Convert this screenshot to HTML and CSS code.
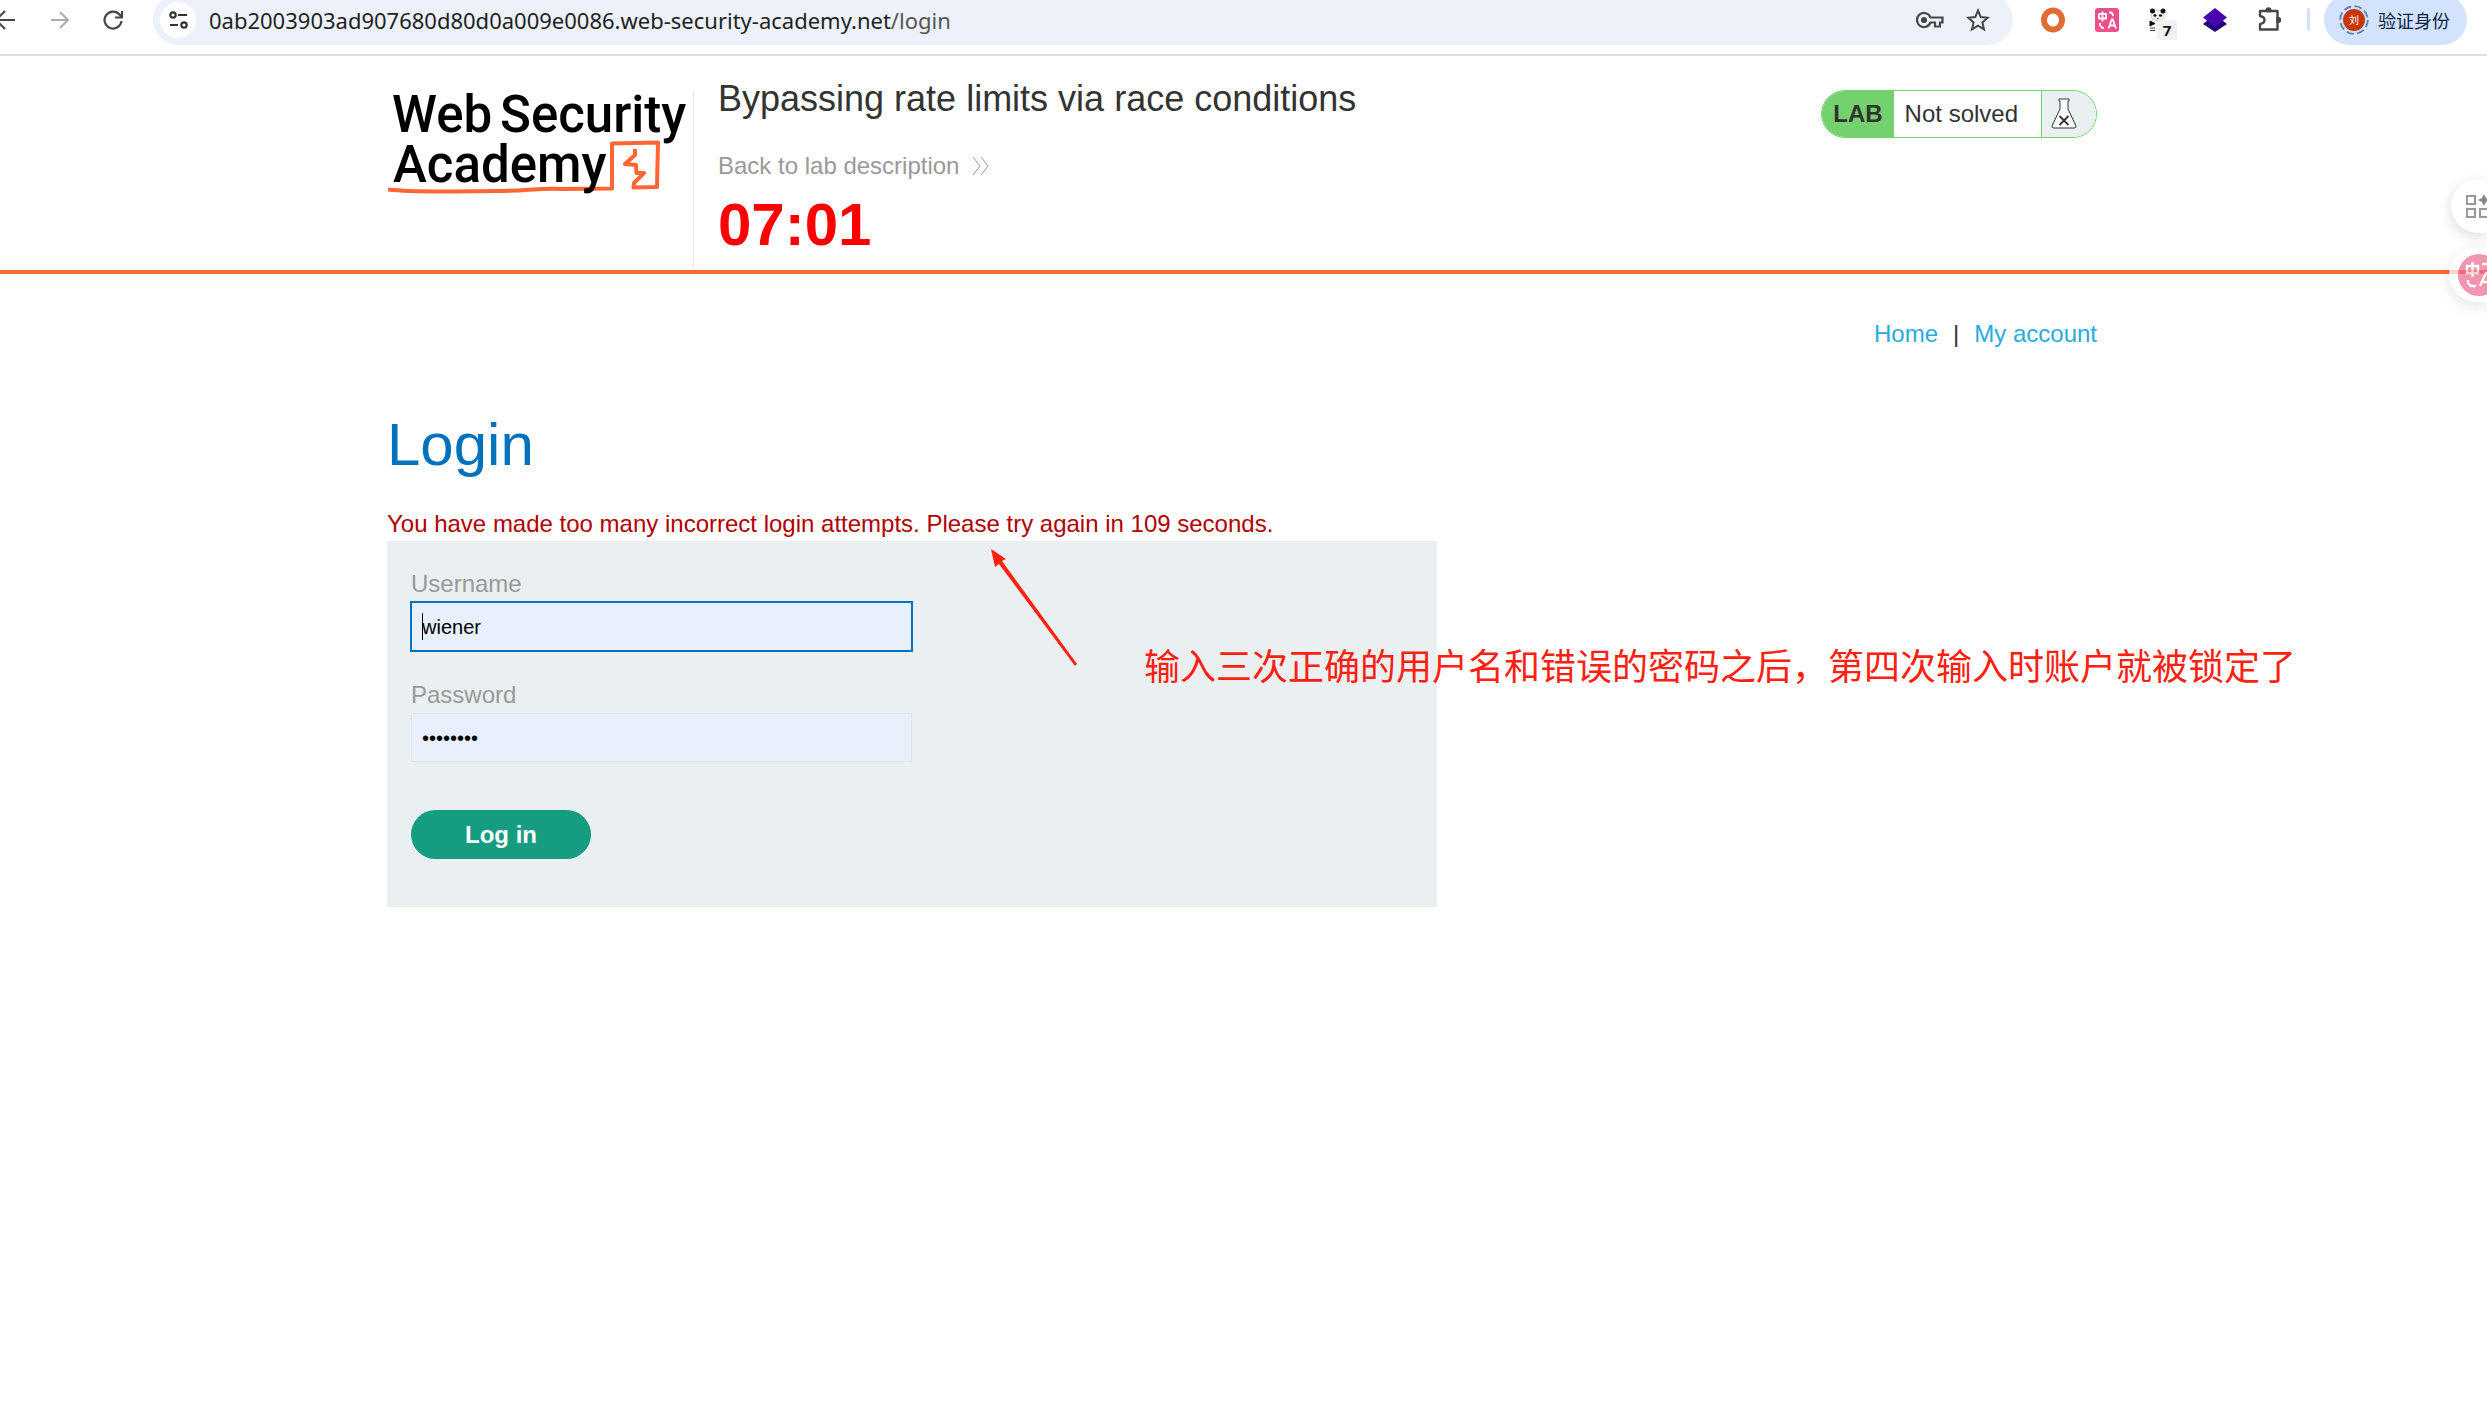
FILE: index.html
```html
<!DOCTYPE html>
<html lang="en">
<head>
    <meta charset="UTF-8">
    <meta name="viewport" content="width=device-width, initial-scale=1.0">
    <title>Bypassing rate limits via race conditions</title>
    <link rel="stylesheet" href="styles.css">
</head>
<body>
    <!-- Browser toolbar -->
    <div class="toolbar">
        <div class="nav-buttons">
            <button type="button" aria-label="Back"><svg width="24" height="24" viewBox="0 0 24 24" fill="none" stroke="#474747" stroke-width="2.2"><path d="M22 12H4M12 3l-9 9 9 9"/></svg></button>
            <button type="button" aria-label="Forward"><svg width="24" height="24" viewBox="0 0 24 24" fill="none" stroke="#ababab" stroke-width="2"><path d="M4 12h17M13 4l8 8-8 8"/></svg></button>
            <button type="button" aria-label="Reload"><svg width="24" height="24" viewBox="0 0 24 24" fill="none" stroke="#474747" stroke-width="2.2"><path d="M20.500 13a8.500 8.500 0 1 1-2-6.500l2 2M21 3v6.500h-7"/></svg></button>
        </div>

        <div class="omnibox">
            <button type="button" class="site-info" aria-label="Site information"><svg width="20" height="20" viewBox="0 0 20 20" fill="none" stroke="#333" stroke-width="2.2"><circle cx="5" cy="5" r="2.700"/><path d="M10 5h9M2 15h8"/><circle cx="16" cy="15" r="2.700"/></svg></button>
            <div class="url">0ab2003903ad907680d80d0a009e0086.web-security-academy.net<span>/login</span></div>
            <button type="button" aria-label="Passwords"><svg width="28" height="20" viewBox="0 0 28 20" fill="none" stroke="#474747" stroke-width="2.2"><path d="M14.500 7.500A7 7 0 1 0 14.500 12.500H19v4h5v-4h2.500v-5z"/><circle cx="8" cy="10" r="2" fill="#474747"/></svg></button>
            <button type="button" aria-label="Bookmark"><svg width="24" height="24" viewBox="0 0 24 24" fill="none" stroke="#474747" stroke-width="2"><path d="M12 2.500l2.700 6.600 7.100.6-5.400 4.700 1.600 7-6-3.700-6 3.700 1.600-7-5.400-4.700 7.100-.6z"/></svg></button>
        </div>

        <div class="extensions">
            <button type="button" aria-label="Proxy"><svg width="24" height="26" viewBox="0 0 24 26"><ellipse cx="12" cy="13" rx="9" ry="9.500" fill="#fff" stroke="#e06b35" stroke-width="6"/></svg></button>
            <button type="button" aria-label="Translate"><svg width="24" height="26" viewBox="0 0 24 26"><rect y="1" width="24" height="24" rx="3" fill="#ee4f8b"/><path d="M4 7h7v4.500H4zM7.500 4.500v10M14 5.500h2.500l2 3.500M5 16v2.500l2.500 2.500H9M13.500 21.500l3.300-9h.9l3.300 9M15 18.500h4.500" fill="none" stroke="#fff" stroke-width="1.800"/></svg></button>
            <button type="button" class="panda" aria-label="Panda"><svg width="24" height="26" viewBox="0 0 24 26"><path d="M2 9c0-8 13-8 13 0 0 6-13 6-13 0z" fill="#f4f4f4" stroke="#ccc"/><circle cx="3.500" cy="4" r="2.500" fill="#111"/><circle cx="14" cy="4" r="2.500" fill="#111"/><ellipse cx="6" cy="8.500" rx="1.600" ry="1.200" fill="#111"/><ellipse cx="11.500" cy="8.500" rx="1.600" ry="1.200" fill="#111"/><path d="M8 11.500h1.500M1 14l5 2.500L1 19z" stroke="#111" fill="#111"/><path d="M1 21h5M1 23.500h5" stroke="#444"/></svg><span class="count">7</span></button>
            <button type="button" aria-label="Layers"><svg width="24" height="26" viewBox="0 0 24 26"><path d="M0 17l5-4h14l5 4-12 8z" fill="#23007c"/><path d="M12 1l12 9.500L12 20 0 10.500z" fill="#4806ad"/></svg></button>
            <button type="button" aria-label="Extensions"><svg width="26" height="26" viewBox="0 0 26 26" fill="none" stroke="#474747" stroke-width="2.400" stroke-linejoin="round"><path d="M3 4h17.500v18.500H3V17c6-1 6-7 0-8z"/><path d="M9.500 4a2 2.500 0 0 1 4 0zM20.500 11a2.500 2 0 0 1 0 4z" fill="#474747"/></svg></button>
        </div>
        <button type="button" class="profile">
            <svg width="30" height="30" viewBox="0 0 30 30"><circle cx="15" cy="15" r="13.800" fill="none" stroke="#5f7fb5" stroke-width="1.800" stroke-dasharray="7.500 3.340"/><circle cx="15" cy="15" r="11" fill="#c6370c"/><text x="15" y="19" class="avatar-text">刘</text></svg>
            验证身份
        </button>
    </div>

    <!-- Lab header -->
    <header class="lab-header">
        <div class="container header-row">
            <div class="logo">
                <svg width="300" height="110" viewBox="0 0 300 110" role="img" aria-label="Web Security Academy">
                    <path d="M1 99.500C30 103 80 101 110 101S150 98 175 99L225 98.500V53.500L271 52.500L270 97L246.500 97.500L247 93L257 83L249.500 83L249 75L238 74L248 65V59" class="logo-line"/>
                    <text x="5" y="42" class="logo-text">Web</text>
                    <text x="113" y="42" class="logo-text">Security</text>
                    <text x="6" y="92" class="logo-text">Academy</text>
                </svg>
            </div>
            <div class="lab-title">
                <h2>Bypassing rate limits via race conditions</h2>
                <a class="back-link" href="#">Back to lab description
                    <svg width="18" height="20" viewBox="0 0 18 20" fill="none" stroke="#999"><path d="M1 1l7 9-7 9M9 1l7 9-7 9"/></svg>
                </a>
                <p class="timer">07:01</p>
            </div>
            <div class="lab-status">
                <span class="status-tag">LAB</span>
                <p>Not solved</p>
                <span class="status-icon"><svg width="26" height="32" viewBox="0 0 26 32" fill="#fff" stroke="#333"><path d="M8 1h10v2h-1v8l8 17q0 2-2 2H3q-2 0-2-2L9 11V3H8z"/><path d="M8.500 18l9 9M17.500 18l-9 9" stroke-width="1.800"/></svg></span>
            </div>
        </div>
    </header>

    <main class="page">
        <div class="container">
            <nav class="top-links">
                <a href="#">Home</a>
                <span>|</span>
                <a href="#">My account</a>
            </nav>

            <h1>Login</h1>
            <p class="warning">You have made too many incorrect login attempts. Please try again in 109 seconds.</p>

            <section class="login-box">
                <form class="login-form">
                    <label for="username">Username</label>
                    <div class="field focused">
                        <input type="text" id="username" name="username" value="wiener">
                    </div>
                    <label for="password">Password</label>
                    <div class="field">
                        <input type="password" id="password" name="password" value="password">
                    </div>
                    <button type="button" class="login-button">Log in</button>
                </form>

                <!-- Red notes drawn over the page -->
                <svg class="arrow" width="90" height="120" viewBox="0 0 90 120" fill="#ff2010"><path d="M0 0L15 10 11 12 86 115 84 117 8 15 4 18z"/></svg>
                <p class="note">输入三次正确的用户名和错误的密码之后，第四次输入时账户就被锁定了</p>
            </section>
        </div>
    </main>

    <!-- Floating side buttons -->
    <div class="side-buttons">
        <button type="button" class="side-apps" aria-label="Apps"><svg width="32" height="26" viewBox="0 0 32 26" fill="none" stroke="#999" stroke-width="2"><rect x="1" y="3" width="8" height="8"/><rect x="1" y="16" width="8" height="8"/><rect x="14" y="16" width="8" height="8"/><path d="M18 1l2 4 4 2-4 2-2 4-2-4-4-2 4-2z" fill="#888" stroke="none"/></svg></button>
        <button type="button" class="side-translate" aria-label="Translate page"><svg width="42" height="42" viewBox="0 0 42 42"><circle cx="21" cy="21" r="21" fill="#ed6d93"/><path d="M9 12h11v7H9zM14.500 8v15M24 10h5l3 5M10 26v3l3 3h5M22 32l6-13h2l6 13M24 28h9" fill="none" stroke="#fff" stroke-width="2.400"/></svg></button>
    </div>
</body>
</html>
```
FILE: styles.css
```css
/* General */
* { box-sizing: border-box; }
body { margin: 0; font-family: "Liberation Sans", Arial, sans-serif; font-size: 24px; line-height: 36px; color: #333332; background: #fff; overflow-x: hidden; }
h1, h2, p { margin: 0; font-weight: normal; }
a { text-decoration: none; }
button { border: none; background: none; padding: 0; font-family: inherit; cursor: pointer; }
svg { display: block; flex: none; }
.container { max-width: 1710px; margin: 0 auto; }

/* Browser toolbar */
.toolbar { display: flex; height: 56px; border-bottom: 2px solid #dedede; overflow: hidden; font-family: "Noto Sans", "Noto Sans CJK SC", sans-serif; }
.toolbar > * { height: 51px; margin-top: -6px; flex: none; }
.nav-buttons { display: flex; align-items: center; gap: 30px; width: 153px; margin-left: -7px; }
.toolbar .omnibox { display: flex; align-items: center; flex: 1; margin-left: 7px; padding: 0 23px 0 7px; border-radius: 26px; background: #ecf1fa; }
.site-info { display: flex; align-items: center; justify-content: center; width: 36px; height: 36px; margin-right: 13px; border-radius: 50%; background: #fff; }
.url { flex: 1; font-size: 22px; color: #1f1f1f; }
.url span { color: #555; }
.omnibox button + button { margin-left: 22px; }
.extensions { display: flex; align-items: center; gap: 30px; padding: 0 27px 0 28px; }
.panda { position: relative; width: 24px; }
.count { position: absolute; left: 8px; top: 13px; width: 20px; border-radius: 4px; background: #f1f1f1; font-size: 15px; font-weight: bold; line-height: 20px; color: #111; }
.profile { position: relative; display: flex; align-items: center; gap: 9px; margin-left: 14px; margin-right: 20px; padding: 0 17px 0 15px; border-radius: 26px; background: #d3e3fd; font-size: 18px; color: #0b1f49; }
.profile::before { content: ""; position: absolute; left: -17px; top: 14px; width: 3px; height: 23px; border-radius: 2px; background: #d3e3fd; }
.avatar-text { font-size: 10px; fill: #fff; text-anchor: middle; }

/* Lab header */
.lab-header { padding: 24px 3px 3px 0; border-bottom: 4px solid #ff6633; }
.header-row { display: flex; align-items: stretch; }
.logo { width: 307px; margin-top: 10px; border-right: 1px solid #e6e6e6; }
.logo svg { overflow: visible; }
.logo-text { font-family: Roboto, sans-serif; font-size: 51px; font-weight: 500; fill: #000; }
.logo-line { fill: none; stroke: #ff6633; stroke-width: 4; stroke-linejoin: round; }
.lab-title { flex: 1; height: 187px; padding-left: 24px; }
.lab-title h2 { margin-bottom: 30px; font-size: 36px; line-height: 38px; }
.back-link { display: flex; align-items: center; gap: 13px; color: #999; }
.timer { margin-top: 11px; font-size: 60px; font-weight: bold; line-height: 60px; color: #f00; }

/* Lab status badge */
.lab-status { display: flex; align-items: stretch; height: 48px; margin-top: 10px; border: 1px solid #6fd46c; border-radius: 24px; overflow: hidden; line-height: 46px; }
.status-tag { padding: 0 11px; background: #73d16e; font-weight: bold; }
.lab-status p { padding: 0 23px 0 11px; }
.status-icon { display: flex; align-items: center; width: 55px; padding-left: 9px; border-left: 1px solid #6fd46c; background: #eaeff2; }

/* Page content */
.page { padding: 42px 3px 0 0; }
.top-links { display: flex; justify-content: flex-end; gap: 15px; margin-bottom: 57px; }
.top-links a { color: #29abe2; }
h1 { margin-bottom: 26px; font-size: 60px; line-height: 72px; color: #0071bc; }
.warning { line-height: 34px; color: #b00000; }

/* Login form */
.login-box { position: relative; max-width: 1050px; padding: 24px 24px 48px; background: #eaf0f2; }
.login-form { max-width: 501px; }
.login-form label { display: block; line-height: 37px; color: #999; }
.field { position: relative; margin-bottom: 25px; }
.field input { display: block; width: 100%; height: 49px; padding: 2px 10px 0; border: 1px solid #e4e4e4; border-radius: 0; background: #e8f0fe; font-family: inherit; font-size: 20px; color: #000; }
.field.focused input { border-color: #0071bc; outline: 1px solid #0071bc; }
.field.focused::before { content: ""; position: absolute; left: 11px; top: 11px; width: 1px; height: 27px; background: #000; }
.login-button { display: block; width: 180px; height: 49px; margin-top: 48px; border-radius: 25px; background: #169c80; font-size: 24px; font-weight: bold; color: #fff; }

/* Red notes */
.arrow { position: absolute; left: 604px; top: 8px; }
.note { position: absolute; left: 757px; top: 105px; font-family: "Noto Sans CJK SC", sans-serif; font-size: 36px; color: #ff2010; white-space: nowrap; }

/* Floating side buttons */
.side-buttons { position: absolute; right: 0; top: 179px; display: flex; flex-direction: column; align-items: flex-end; gap: 15px; width: 38px; }
.side-buttons button { display: flex; align-items: center; height: 54px; border-radius: 27px 0 0 27px; background: #fff; box-shadow: 0 4px 14px rgba(0, 0, 0, 0.15); overflow: hidden; }
.side-apps { width: 36px; padding-left: 15px; }
.side-translate { width: 38px; padding-left: 9px; opacity: 0.72; }
```
